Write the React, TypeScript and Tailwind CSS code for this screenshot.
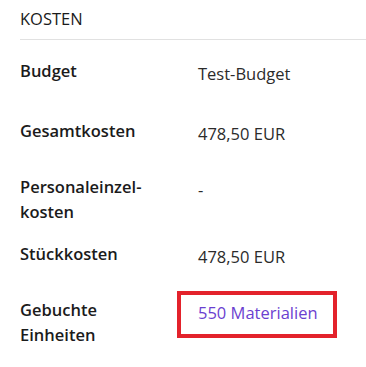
export default function App() {
  const rows: { label: string; value: string; link?: boolean }[] = [
    { label: "Budget", value: "Test-Budget" },
    { label: "Gesamtkosten", value: "478,50 EUR" },
    { label: "Personaleinzel\u00ADkosten", value: "-" },
    { label: "Stückkosten", value: "478,50 EUR" },
    { label: "Gebuchte Einheiten", value: "550 Materialien", link: true },
  ];

  return (
    <div
      className="min-h-screen bg-white pl-5 text-[16.5px] text-[#1b1b1b]"
      style={{ fontFamily: '"Open Sans", "Noto Sans", sans-serif' }}
    >
      <div className="border-b border-[#e1e1e1] pt-[7px] pb-2 leading-6 font-medium">
        KOSTEN
      </div>

      <dl className="pt-[18px]">
        {rows.map((row, i) => (
          <div
            key={row.label}
            className={`flex pb-[17px] ${i === 0 ? "min-h-[60px]" : "min-h-[56px]"}`}
          >
            <dt className="w-[178px] shrink-0 pr-[28px] font-semibold leading-[25px] [hyphens:manual]">
              {row.label}
            </dt>
            <dd className="relative pt-[3px] leading-[25px] text-[#2b2b2b]">
              {row.link ? (
                <>
                  <a href="#" className="text-[#6b3fd0]">
                    {row.value}
                  </a>
                  <span className="pointer-events-none absolute -left-[21px] -top-[6px] h-[47px] w-[160px] border-4 border-[#e3222b]" />
                </>
              ) : (
                row.value
              )}
            </dd>
          </div>
        ))}
      </dl>
    </div>
  );
}
